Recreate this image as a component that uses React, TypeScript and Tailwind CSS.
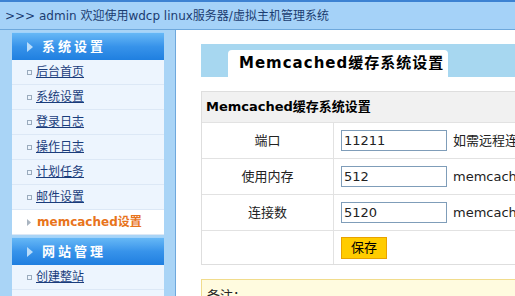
const font = { fontFamily: '"DejaVu Sans", "Noto Sans CJK SC", sans-serif' };

interface NavItem {
    name: string;
    active?: boolean;
}

const systemItems: NavItem[] = [
    { name: "后台首页" },
    { name: "系统设置" },
    { name: "登录日志" },
    { name: "操作日志" },
    { name: "计划任务" },
    { name: "邮件设置" },
    { name: "memcached设置", active: true },
];

const siteItems: NavItem[] = [{ name: "创建整站" }];

function GroupHeader({ title }: { title: string }) {
    return (
        <div className="h-[28px] flex items-center bg-gradient-to-b from-[#66b8f6] via-[#3793ea] to-[#1f7fe0] border-t border-[#9fd2fb]">
            <svg width="6" height="10" viewBox="0 0 6 10" className="ml-[15px]">
                <path d="M0 0 L6 5 L0 10 Z" fill="#b9dcfa" />
            </svg>
            <span className="ml-[9px] text-[13px] font-bold tracking-[3px] text-white">{title}</span>
        </div>
    );
}

function NavRow({ item }: { item: NavItem }) {
    if (item.active) {
        return (
            <div className="h-[25px] flex items-center bg-white border-b border-[#dce8f6]">
                <svg width="4" height="7" viewBox="0 0 4 7" className="ml-[15px]">
                    <path d="M0 0 L4 3.5 L0 7 Z" fill="#a9b4c0" />
                </svg>
                <span className="ml-[6px] text-[12px] font-bold text-[#e8741c]">{item.name}</span>
            </div>
        );
    }
    return (
        <div className="h-[25px] flex items-center bg-[#edf5fe] border-b border-[#dce8f6]">
            <span className="ml-[15px] w-[5px] h-[5px] border border-[#9aabbd]" />
            <a className="ml-[4px] text-[12px] text-[#1a3d7c] underline">{item.name}</a>
        </div>
    );
}

interface FieldRow {
    label: string;
    value: string;
    note: string;
}

const fields: FieldRow[] = [
    { label: "端口", value: "11211", note: "如需远程连接,请在防火墙中开放此端口" },
    { label: "使用内存", value: "512", note: "memcached使用的内存大小(单位M)" },
    { label: "连接数", value: "5120", note: "memcached最大连接数" },
];

export default function App() {
    return (
        <div className="w-[515px] h-[296px] overflow-hidden bg-[#a9d4f6]" style={font}>
            <div className="h-[30px] border-t-2 border-[#3d82d2] border-b border-b-[#6ea8dc] bg-[#a5d2f8] flex items-center pl-[5px] text-[12px] text-[#1b3c70] whitespace-nowrap">
                &gt;&gt;&gt; admin 欢迎使用wdcp linux服务器/虚拟主机管理系统
            </div>

            <div className="flex items-start">
                <div className="ml-[12px] mt-[2px] w-[152px] shrink-0">
                    <GroupHeader title="系统设置" />
                    {systemItems.map((item) => (
                        <NavRow key={item.name} item={item} />
                    ))}
                    <div className="mt-[2px]">
                        <GroupHeader title="网站管理" />
                        {siteItems.map((item) => (
                            <NavRow key={item.name} item={item} />
                        ))}
                        <div className="h-[25px] bg-[#edf5fe]" />
                    </div>
                </div>

                <div className="ml-[11px] flex-1 h-[280px] bg-white border-l border-[#6fa8dc] pl-[25px] pt-[14px] overflow-hidden">
                    <div className="h-[33px] bg-[#a7d7f0] flex items-end pl-[27px] w-[600px]">
                        <div className="h-[27px] w-[220px] bg-white rounded-t-[4px] flex items-center pl-[11px] text-[15px] font-semibold tracking-[1px] text-black whitespace-nowrap">
                            Memcached缓存系统设置
                        </div>
                    </div>

                    <div className="mt-[14px] w-[600px] border border-[#dedede]">
                        <div className="h-[31px] bg-[#f1f1f1] flex items-center pl-[4px] text-[13px] font-bold text-black border-b border-[#e2e2e2]">
                            Memcached缓存系统设置
                        </div>
                        {fields.map((f) => (
                            <div key={f.label} className="h-[36px] flex border-b border-[#e2e2e2]">
                                <div className="w-[132px] flex items-center justify-center text-[13px] text-[#222] border-r border-[#e2e2e2]">
                                    {f.label}
                                </div>
                                <div className="flex items-center pl-[7px] text-[13px] text-[#222] whitespace-nowrap">
                                    <div className="w-[106px] h-[21px] border border-[#7f9db9] flex items-center px-[2px] bg-white">
                                        {f.value}
                                    </div>
                                    <span className="ml-[6px]">{f.note}</span>
                                </div>
                            </div>
                        ))}
                        <div className="h-[33px] flex">
                            <div className="w-[132px] border-r border-[#e2e2e2]" />
                            <div className="flex items-center pl-[7px]">
                                <button className="w-[46px] h-[22px] bg-[#ffcc00] border border-[#e8a200] text-[13px] text-black">
                                    保存
                                </button>
                            </div>
                        </div>
                    </div>

                    <div className="mt-[14px] w-[600px] h-[40px] bg-[#fffbdf] border border-[#f1dc8c] pl-[5px] pt-[6px] text-[13px] text-[#222]">
                        备注：
                    </div>
                </div>
            </div>
        </div>
    );
}
